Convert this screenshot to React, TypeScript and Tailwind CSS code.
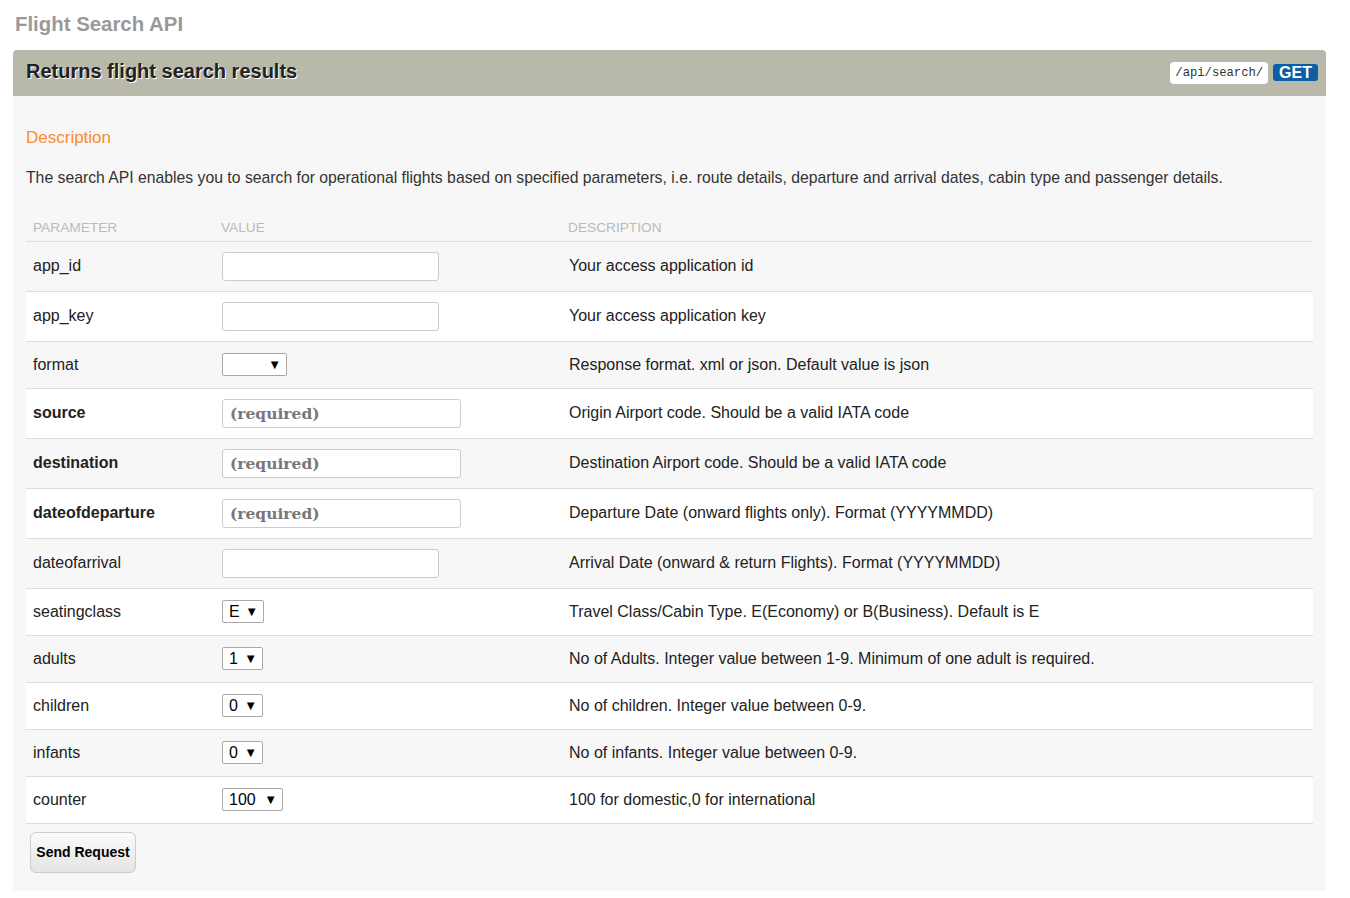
import React from "react";

interface Param {
  name: string;
  kind: "text" | "required" | "select";
  options?: string;
  selectWidth?: string;
  description: string;
}

const params: Param[] = [
  { name: "app_id", kind: "text", description: "Your access application id" },
  { name: "app_key", kind: "text", description: "Your access application key" },
  { name: "format", kind: "select", options: "", selectWidth: "w-[65px]", description: "Response format. xml or json. Default value is json" },
  { name: "source", kind: "required", description: "Origin Airport code. Should be a valid IATA code" },
  { name: "destination", kind: "required", description: "Destination Airport code. Should be a valid IATA code" },
  { name: "dateofdeparture", kind: "required", description: "Departure Date (onward flights only). Format (YYYYMMDD)" },
  { name: "dateofarrival", kind: "text", description: "Arrival Date (onward & return Flights). Format (YYYYMMDD)" },
  { name: "seatingclass", kind: "select", options: "E", selectWidth: "w-[42px]", description: "Travel Class/Cabin Type. E(Economy) or B(Business). Default is E" },
  { name: "adults", kind: "select", options: "1", selectWidth: "w-[41px]", description: "No of Adults. Integer value between 1-9. Minimum of one adult is required." },
  { name: "children", kind: "select", options: "0", selectWidth: "w-[41px]", description: "No of children. Integer value between 0-9." },
  { name: "infants", kind: "select", options: "0", selectWidth: "w-[41px]", description: "No of infants. Integer value between 0-9." },
  { name: "counter", kind: "select", options: "100", selectWidth: "w-[61px]", description: "100 for domestic,0 for international" },
];

const FakeSelect = ({ value, width }: { value: string; width: string }) => (
  <div
    className={`${width} h-[23px] border border-[#a9a9a9] rounded-[2px] bg-white flex items-center justify-between pl-[6px] pr-[5px] text-[16px] text-black`}
  >
    <span>{value}</span>
    <span className="text-[13px] leading-none">▼</span>
  </div>
);

const App = () => {
  return (
    <div className="min-h-[898px] bg-white font-['Liberation_Sans',Arial,sans-serif] text-[#333]">
      <h1 className="pl-[15px] pt-[11px] h-[50px] text-[20.4px] leading-[26px] font-bold text-[#999]">
        Flight Search API
      </h1>

      <div className="mx-[13px] w-[1313px]">
        {/* Header */}
        <div className="h-[46px] bg-[#b9b9ab] rounded-t-[4px] flex items-center justify-between pl-[13px] pr-[8px]">
          <h2 className="mb-[4px] text-[20px] font-bold text-[#222] [text-shadow:1px_1px_0_#fff]">
            Returns flight search results
          </h2>
          <div className="flex items-center gap-[5px] mt-[-1px]">
            <code className="bg-white rounded-[4px] px-[5px] h-[22px] leading-[22px] text-[12.2px] text-[#333] font-['Liberation_Mono',monospace]">
              /api/search/
            </code>
            <span className="bg-[#0c5fa5] rounded-[3px] px-[6px] h-[17px] leading-[17px] text-[16px] font-bold text-white">
              GET
            </span>
          </div>
        </div>

        {/* Body */}
        <div className="bg-[#f7f7f7] px-[13px] pt-[30px] pb-[18px]">
          <h3 className="text-[17px] leading-[24px] text-[#fb8a2e]">Description</h3>
          <p className="mt-[16px] text-[15.75px] leading-[24px] text-[#333]">
            The search API enables you to search for operational flights based on specified parameters, i.e. route details, departure and arrival dates, cabin type and passenger details.
          </p>

          <table className="mt-[26px] w-full border-collapse">
            <thead>
              <tr className="border-b border-[#ddd] text-left">
                <th className="w-[189px] pl-[7px] pt-[2px] pb-[2px] text-[13.7px] font-normal text-[#bbb] uppercase">Parameter</th>
                <th className="w-[346px] pl-[6px] pt-[2px] pb-[2px] text-[13.7px] font-normal text-[#bbb] uppercase">Value</th>
                <th className="pl-[7px] pt-[2px] pb-[2px] text-[13.7px] font-normal text-[#bbb] uppercase">Description</th>
              </tr>
            </thead>
            <tbody>
              {params.map((p, i) => (
                <tr
                  key={p.name}
                  className={`border-b border-[#ddd] ${i % 2 === 1 ? "bg-white" : ""} ${p.kind === "select" ? "h-[47px]" : "h-[50px]"}`}
                >
                  <td className={`pl-[7px] text-[16px] text-[#222] ${p.kind === "required" ? "font-bold" : ""}`}>
                    {p.name}
                  </td>
                  <td className="pl-[7px]">
                    {p.kind === "text" && (
                      <input
                        type="text"
                        className="block w-[217px] h-[29px] bg-white border border-[#ccc] rounded-[3px] outline-none"
                      />
                    )}
                    {p.kind === "required" && (
                      <input
                        type="text"
                        placeholder="(required)"
                        className="block w-[239px] h-[29px] bg-white border border-[#ccc] rounded-[3px] px-[7px] text-[15.5px] font-bold font-['DejaVu_Serif',serif] placeholder:text-[#777] outline-none"
                      />
                    )}
                    {p.kind === "select" && (
                      <FakeSelect value={p.options ?? ""} width={p.selectWidth ?? "w-[41px]"} />
                    )}
                  </td>
                  <td className="pl-[8px] text-[16px] text-[#222]">{p.description}</td>
                </tr>
              ))}
            </tbody>
          </table>

          <button className="mt-[8px] ml-[4px] w-[106px] h-[41px] rounded-[6px] border border-[#ccc] bg-gradient-to-b from-[#fbfbfb] to-[#e4e4e4] text-[14px] font-bold text-black">
            Send Request
          </button>
        </div>
      </div>
    </div>
  );
};

export default App;
